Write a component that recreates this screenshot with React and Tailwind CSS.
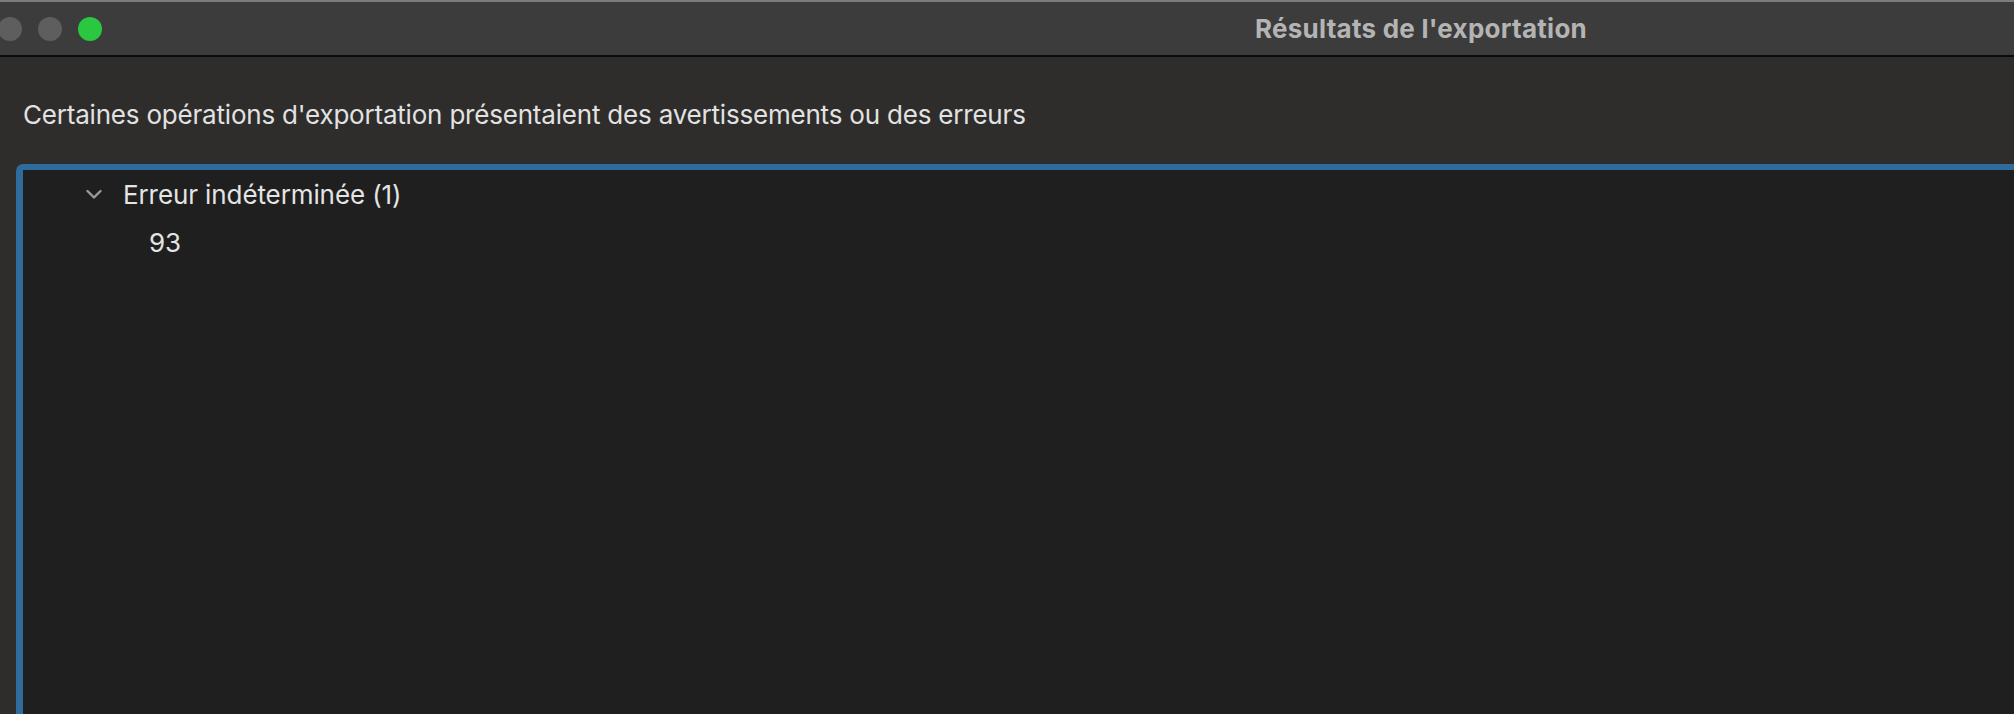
export default function App() {
  return (
    <div
      className="w-[2014px] h-[714px] overflow-hidden bg-[#2e2d2c] flex flex-col"
      style={{ fontFamily: "Inter, 'Noto Sans', 'Liberation Sans', sans-serif" }}
    >
      <div className="h-[2px] bg-[#7c7c7c] shrink-0" />
      <div className="h-[53px] shrink-0 bg-[#3c3c3c] border-b-2 border-[#0b0b0b] flex items-center box-content">
        <div className="flex items-center gap-[16px] ml-[-2px]">
          <div className="w-[24px] h-[24px] rounded-full bg-[#5e5e5e]" />
          <div className="w-[24px] h-[24px] rounded-full bg-[#5e5e5e]" />
          <div className="w-[24px] h-[24px] rounded-full bg-[#2ac840]" />
        </div>
        <div className="ml-[1153px] text-[26px] font-bold tracking-[0.25px] text-[#b4b4b4]">
          Résultats de l'exportation
        </div>
      </div>
      <div className="flex-1 flex flex-col">
        <div className="pl-[23px] pt-[42px] pb-[33px] text-[26px] leading-[32px] tracking-[-0.2px] text-[#e2e2e2] font-normal">
          Certaines opérations d'exportation présentaient des avertissements ou des erreurs
        </div>
        <div className="flex-1 ml-[16px] -mr-[20px] -mb-[20px] border-t-[6px] border-l-[7px] border-[#2f6b9b] rounded-tl-[7px] bg-[#1f1f1f]">
          <div className="flex flex-col">
            <div className="h-[48px] flex items-center">
              <svg
                className="ml-[63px] w-[16px] h-[12px]"
                viewBox="0 0 16 12"
                fill="none"
                stroke="#9a9a9a"
                strokeWidth="2.4"
                strokeLinecap="round"
                strokeLinejoin="round"
              >
                <path d="M1.5 3 L8 9.5 L14.5 3" />
              </svg>
              <span className="ml-[21px] text-[26px] tracking-[-0.1px] text-[#e4e4e4] font-normal">
                Erreur indéterminée (1)
              </span>
            </div>
            <div className="h-[48px] flex items-center pl-[126px] text-[26px] text-[#e4e4e4] font-normal">
              93
            </div>
          </div>
        </div>
      </div>
    </div>
  );
}
